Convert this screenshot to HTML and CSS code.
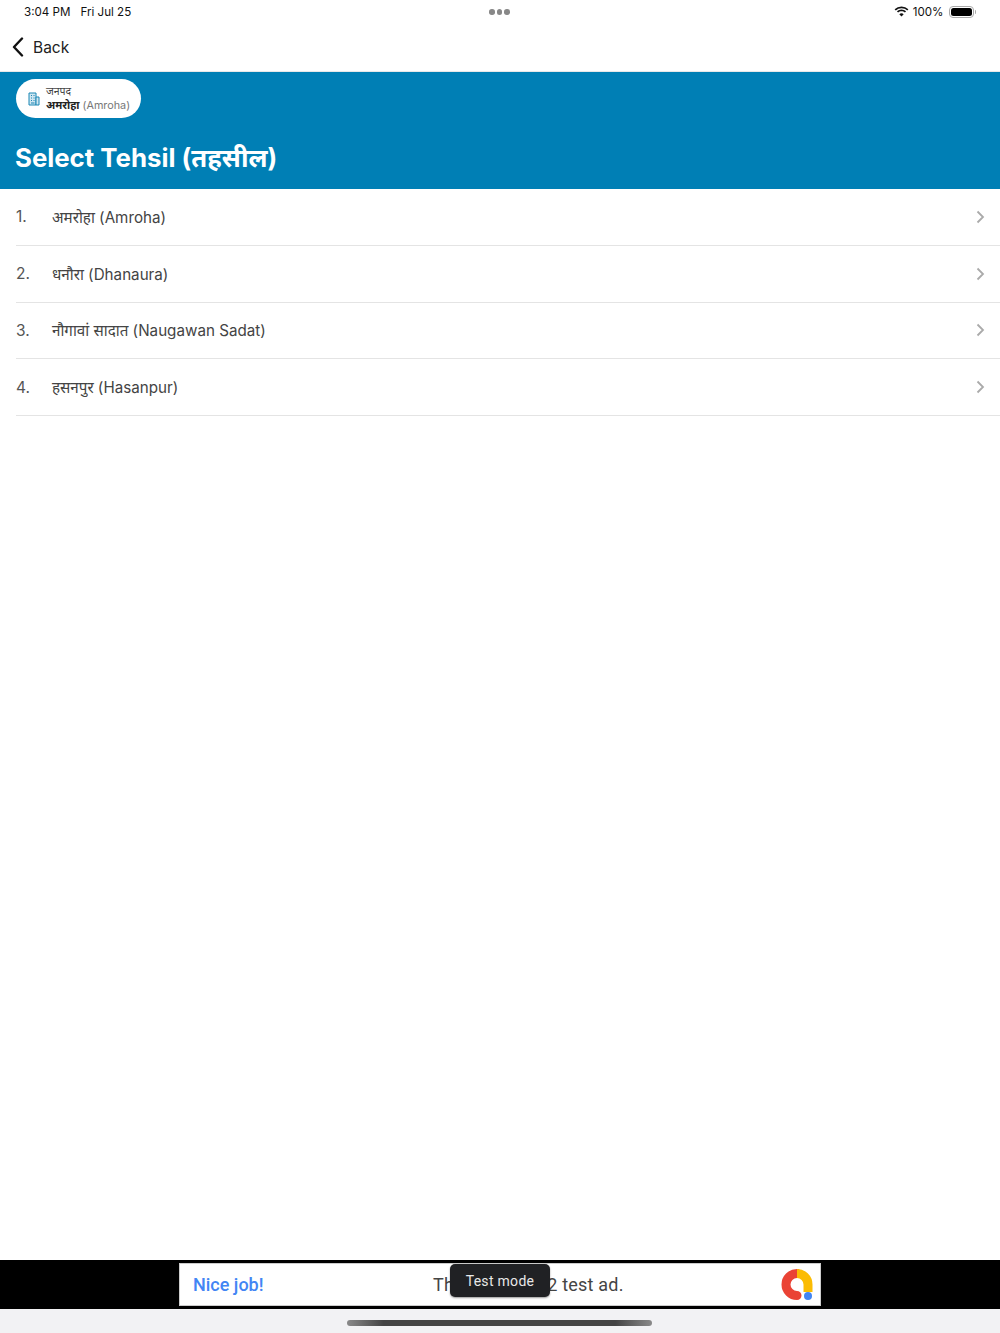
FILE: index.html
```html
<!DOCTYPE html>
<html lang="en">
<head>
  <meta charset="UTF-8" />
  <title>Select Tehsil</title>
  <link rel="stylesheet" href="styles.css">
</head>
<body>
  <div class="page">
    <!-- Status bar -->
    <div class="status-bar">
      <div class="status-left"><span>3:04 PM</span><span>Fri Jul 25</span></div>
      <div class="status-dots"><i></i><i></i><i></i></div>
      <div class="status-right">
        <svg class="wifi" width="15" height="11" viewBox="0 0 15 11">
          <path d="M7.5 2.2c2.2 0 4.2.9 5.7 2.3l1.2-1.3A10 10 0 0 0 7.5.4 10 10 0 0 0 .6 3.2l1.2 1.3a8.2 8.2 0 0 1 5.7-2.3z"/>
          <path d="M7.5 5.3c1.3 0 2.5.5 3.4 1.3l1.2-1.3a6.7 6.7 0 0 0-9.2 0l1.2 1.3c.9-.8 2.1-1.3 3.4-1.3z"/>
          <path d="M7.5 10.6l2.2-2.4a3.2 3.2 0 0 0-4.4 0z"/>
        </svg>
        <span>100%</span>
        <div class="battery"><div class="battery-fill"></div></div>
        <div class="battery-nub"></div>
      </div>
    </div>

    <!-- Nav -->
    <div class="nav">
      <svg width="12" height="20" viewBox="0 0 12 20" class="back-icon">
        <path d="M10 1.5 2 10l8 8.5" fill="none" stroke="#111" stroke-width="2.4" stroke-linecap="round" stroke-linejoin="round"/>
      </svg>
      <span>Back</span>
    </div>

    <!-- Blue header -->
    <div class="header">
      <div class="pill">
        <svg class="pill-icon" width="12" height="14" viewBox="0 0 12 14">
          <path d="M1 1h7v12H1z" fill="#cfe6f1" stroke="#1b87b5" stroke-width="1"/>
          <path d="M8 5h3v8H8z" fill="#cfe6f1" stroke="#1b87b5" stroke-width="1"/>
          <path d="M3 3.5h1M5.5 3.5h1M3 6h1M5.5 6h1M3 8.5h1M5.5 8.5h1M3 11h3.5" stroke="#1b87b5" stroke-width="1"/>
        </svg>
        <div class="pill-text">
          <div class="pill-label">जनपद</div>
          <div class="pill-value"><b>अमरोहा</b> <span>(Amroha)</span></div>
        </div>
      </div>
      <h1>Select Tehsil (तहसील)</h1>
    </div>

    <!-- Tehsil list -->
    <ul class="list">
      <li class="row">
        <span class="num">1.</span><span class="name">अमरोहा (Amroha)</span>
        <svg class="chevron" width="9" height="14" viewBox="0 0 9 14"><path d="M1.5 1.5 7 7l-5.5 5.5"/></svg>
      </li>
      <li class="row">
        <span class="num">2.</span><span class="name">धनौरा (Dhanaura)</span>
        <svg class="chevron" width="9" height="14" viewBox="0 0 9 14"><path d="M1.5 1.5 7 7l-5.5 5.5"/></svg>
      </li>
      <li class="row">
        <span class="num">3.</span><span class="name">नौगावां सादात (Naugawan Sadat)</span>
        <svg class="chevron" width="9" height="14" viewBox="0 0 9 14"><path d="M1.5 1.5 7 7l-5.5 5.5"/></svg>
      </li>
      <li class="row">
        <span class="num">4.</span><span class="name">हसनपुर (Hasanpur)</span>
        <svg class="chevron" width="9" height="14" viewBox="0 0 9 14"><path d="M1.5 1.5 7 7l-5.5 5.5"/></svg>
      </li>
    </ul>

    <!-- Test ad banner -->
    <div class="ad-bar">
      <div class="ad">
        <span class="ad-title">Nice job!</span>
        <span class="ad-text">This is an 1032 test ad.</span>
        <svg class="ad-logo" width="34" height="34" viewBox="0 0 34 34">
          <path d="M17 5.5a11 11 0 0 0 0 22" fill="none" stroke="#ea4335" stroke-width="9" stroke-linecap="round"/>
          <path d="M28 24v-7.5a11 11 0 0 0-11-11" fill="none" stroke="#fbbc04" stroke-width="9"/>
          <circle cx="28" cy="28" r="4" fill="#4285f4"/>
        </svg>
        <div class="test-mode">Test mode</div>
      </div>
    </div>

    <!-- Home indicator -->
    <div class="home-bar"><div class="home-handle"></div></div>
  </div>
</body>
</html>
```

FILE: styles.css
```css
/* Base */
body {
  margin: 0;
  background: #fff;
  font-family: Inter, Roboto, "Noto Sans", "Noto Sans Devanagari", "Lohit Devanagari", sans-serif;
  color: #333;
}
.page {
  height: 1333px;
  display: flex;
  flex-direction: column;
  overflow: hidden;
}
/* Status bar */
.status-bar {
  height: 23px;
  padding: 0 24px;
  display: flex;
  align-items: center;
  justify-content: space-between;
  font-size: 11.6px;
  color: #111;
  position: relative;
}
.status-left {
  display: flex;
  gap: 10px;
}
.status-dots {
  position: absolute;
  left: 489px;
  top: 9px;
  display: flex;
  gap: 2px;
}
.status-dots i {
  width: 5.5px;
  height: 5.5px;
  border-radius: 50%;
  background: #888;
}
.status-right {
  display: flex;
  align-items: center;
  gap: 3px;
}
.wifi {
  fill: #111;
  margin-right: 1px;
}
.battery {
  width: 25px;
  height: 12px;
  margin-left: 2px;
  border: 1px solid #aaa;
  border-radius: 4px;
  padding: 1px;
  box-sizing: border-box;
}
.battery-fill {
  height: 100%;
  background: #000;
  border-radius: 2.5px;
}
.battery-nub {
  width: 1.5px;
  height: 4px;
  margin-left: -2px;
  background: #aaa;
  border-radius: 0 1px 1px 0;
}
/* Nav */
.nav {
  height: 49px;
  padding: 0 12px;
  box-sizing: border-box;
  display: flex;
  align-items: center;
  gap: 9px;
  font-size: 15.5px;
  color: #222;
  border-bottom: 1px solid #e8e8e8;
}
/* Header */
.header {
  background: #007fb5;
  height: 117px;
  padding: 7px 16px 0;
  box-sizing: border-box;
}
.pill {
  width: 125px;
  height: 39px;
  background: #fff;
  border-radius: 20px;
  display: flex;
  align-items: center;
  box-sizing: border-box;
  padding-left: 12px;
  gap: 6px;
}
.pill-text {
  padding-top: 1px;
}
.pill-label {
  font-size: 10.5px;
  line-height: 12px;
  color: #444;
}
.pill-value {
  margin-top: 1px;
  font-size: 10.8px;
  line-height: 14px;
  color: #777;
  white-space: nowrap;
}
.pill-value b {
  color: #222;
}
h1 {
  margin: 0 0 0 -1px;
  padding-top: 24px;
  font-size: 25.8px;
  line-height: 31px;
  font-weight: 700;
  color: #fff;
  white-space: nowrap;
}
/* List */
.list {
  flex: 1;
  margin: 0;
  padding: 0 0 0 16px;
  list-style: none;
}
.row {
  height: 56.8px;
  box-sizing: border-box;
  border-bottom: 1px solid #e4e4e4;
  display: flex;
  align-items: center;
  padding-right: 15px;
  font-size: 15.2px;
  color: #444;
}
.num {
  width: 36px;
  font-size: 15.5px;
  color: #555;
}
.name {
  flex: 1;
}
.chevron {
  fill: none;
  stroke: #aaa;
  stroke-width: 1.8;
}
/* Ad */
.ad-bar {
  height: 49px;
  background: #000;
  display: flex;
  justify-content: center;
  align-items: center;
}
.ad {
  width: 642px;
  height: 43px;
  background: #fff;
  border: 1px solid #ccc;
  position: relative;
  display: flex;
  align-items: center;
  box-sizing: border-box;
  padding: 0 6px 0 13px;
  font-family: Roboto, sans-serif;
}
.ad-title {
  color: #4285f4;
  font-size: 18px;
  font-weight: 500;
  width: 240px;
}
.ad-text {
  flex: 1;
  font-size: 18px;
  letter-spacing: 0.2px;
  color: #444;
}
.test-mode {
  position: absolute;
  left: 270px;
  top: 0;
  width: 100px;
  height: 33px;
  line-height: 34px;
  text-align: center;
  background: #202124;
  color: #e8e8e8;
  font-size: 14px;
  letter-spacing: 0.3px;
  border-radius: 5px;
  box-shadow: 0 1px 2px rgba(0, 0, 0, 0.4);
}
/* Home indicator */
.home-bar {
  height: 24px;
  background: #f2f2f4;
  display: flex;
  justify-content: center;
  padding: 11px 1px 0 0;
  box-sizing: border-box;
}
.home-handle {
  width: 305px;
  height: 6px;
  border-radius: 3px;
  background: linear-gradient(90deg, #8a8a8a, #444 12%, #444 88%, #8a8a8a);
}
```
